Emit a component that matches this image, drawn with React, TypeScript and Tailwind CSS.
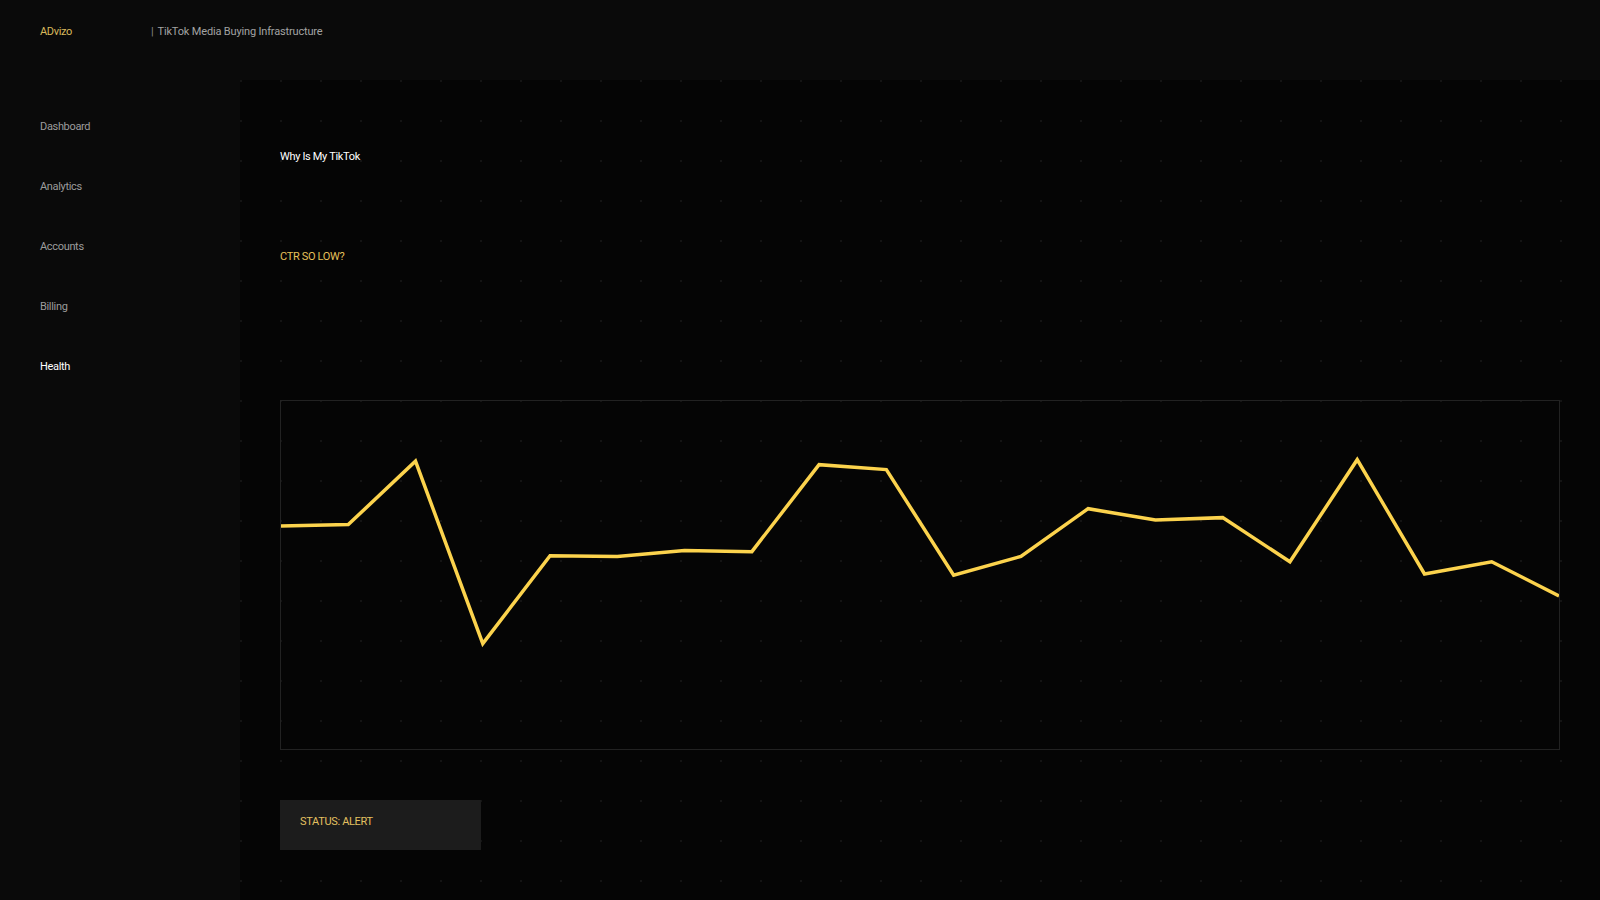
import React from "react";

const navItems = ["Dashboard", "Analytics", "Accounts", "Billing", "Health"];

// chart points in box pixels (1280 x 350)
const ys = [
  125.7, 124.3, 60.5, 244, 155.7, 156.3, 150.3, 151.5, 64, 69, 175.3, 156.3,
  108.3, 119.7, 117.3, 161.7, 59, 174, 161.7, 196,
];

const points = ys
  .map((y, i) => `${((i * 1280) / (ys.length - 1)).toFixed(1)},${y}`)
  .join(" ");

const App = () => {
  return (
    <div className="min-h-screen w-full bg-[#050505] font-['Roboto',sans-serif] text-[11px] leading-[14px] tracking-[-0.03em]">
      <header className="h-20 w-full bg-[#0a0a0a] flex items-start pt-[25px] px-10">
        <div className="w-[111px] text-[#d9b95c]">ADvizo</div>
        <div className="flex items-center text-[#a3a3a3] tracking-[-0.015em]">
          <span className="mr-[4px] text-[#8a8a8a]">|</span>
          <span>TikTok Media Buying Infrastructure</span>
        </div>
      </header>

      <div className="flex w-full">
        <aside className="w-[240px] shrink-0 bg-[#0a0a0a] pt-[17px] px-10 min-h-[820px]">
          {navItems.map((item) => (
            <div
              key={item}
              className={`h-[60px] flex items-center ${
                item === "Health" ? "text-white" : "text-[#9c9c9c]"
              }`}
            >
              {item}
            </div>
          ))}
        </aside>

        <main className="flex-1 p-10 bg-[#050505] bg-[radial-gradient(circle_at_1px_1px,#141414_1px,transparent_0)] bg-[size:40px_40px]">
          <h1 className="mt-[30px] text-white">Why Is My TikTok</h1>
          <h2 className="mt-[86px] text-[#e6c15a]">CTR SO LOW?</h2>

          <div className="mt-[136px] h-[350px] w-full border border-[#222222]">
            <svg
              className="block w-full h-full"
              viewBox="0 0 1280 350"
              preserveAspectRatio="none"
            >
              <polyline
                points={points}
                fill="none"
                stroke="#fcd34d"
                strokeWidth={3.5}
                strokeLinejoin="miter"
                vectorEffect="non-scaling-stroke"
              />
            </svg>
          </div>

          <div className="mt-[50px] h-[50px] w-[201px] bg-[#1c1c1c] px-5 pt-[15px] text-[#e3c060]">
            STATUS: ALERT
          </div>
        </main>
      </div>
    </div>
  );
};

export default App;
